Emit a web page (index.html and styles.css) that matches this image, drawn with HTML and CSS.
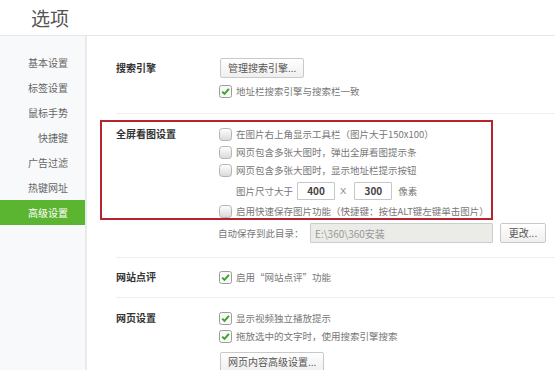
FILE: index.html
```html
<!DOCTYPE html>
<html lang="zh-CN">
<head>
<meta charset="utf-8">
<title>选项</title>
<link rel="stylesheet" href="styles.css">
</head>
<body>
<div class="page">
  <header class="header"><h1 class="title">选项</h1></header>
  <div class="main">
    <nav class="sidebar">
      <a class="nav-item">基本设置</a>
      <a class="nav-item">标签设置</a>
      <a class="nav-item">鼠标手势</a>
      <a class="nav-item">快捷键</a>
      <a class="nav-item">广告过滤</a>
      <a class="nav-item">热键网址</a>
      <a class="nav-item active">高级设置</a>
    </nav>
    <div class="content">
      <section class="section s-search">
        <div class="label l-btn">搜索引擎</div>
        <div class="controls">
          <button class="btn">管理搜索引擎...</button>
          <label class="check after-btn"><svg class="box" width="13" height="13" viewBox="0 0 13 13"><rect x="0.5" y="0.5" width="12" height="12" rx="2" fill="#f8f8f8" stroke="#9c9c9c"/><path d="M3.2 6.6 L5.5 8.9 L9.9 3.9" fill="none" stroke="#3ba22d" stroke-width="2"/></svg>地址栏搜索引擎与搜索栏一致</label>
        </div>
      </section>
      <section class="section s-view">
        <div class="label">全屏看图设置</div>
        <div class="controls">
          <label class="check"><svg class="box" width="13" height="13" viewBox="0 0 13 13"><defs><linearGradient id="g1" x1="0" y1="0" x2="0" y2="1"><stop offset="0" stop-color="#ffffff"/><stop offset="1" stop-color="#d9d9d9"/></linearGradient></defs><rect x="0.5" y="0.5" width="12" height="12" rx="3" fill="url(#g1)" stroke="#b4b4b4"/></svg>在图片右上角显示工具栏（图片大于150x100）</label>
          <label class="check"><svg class="box" width="13" height="13" viewBox="0 0 13 13"><rect x="0.5" y="0.5" width="12" height="12" rx="3" fill="url(#g1)" stroke="#b4b4b4"/></svg>网页包含多张大图时，弹出全屏看图提示条</label>
          <label class="check"><svg class="box" width="13" height="13" viewBox="0 0 13 13"><rect x="0.5" y="0.5" width="12" height="12" rx="3" fill="url(#g1)" stroke="#b4b4b4"/></svg>网页包含多张大图时，显示地址栏提示按钮</label>
          <div class="size-row">
            <span>图片尺寸大于</span>
            <input class="num" type="text" value="400">
            <span class="times">X</span>
            <input class="num" type="text" value="300">
            <span class="unit">像素</span>
          </div>
          <label class="check"><svg class="box" width="13" height="13" viewBox="0 0 13 13"><rect x="0.5" y="0.5" width="12" height="12" rx="3" fill="url(#g1)" stroke="#b4b4b4"/></svg>启用快速保存图片功能（快捷键：按住ALT键左键单击图片）</label>
          <div class="dir-row">
            <span class="dir-label">自动保存到此目录：</span>
            <input class="dir" type="text" value="E:\360\360安装" readonly>
            <button class="btn btn-change">更改...</button>
          </div>
        </div>
      </section>
      <section class="section s-review">
        <div class="label">网站点评</div>
        <div class="controls">
          <label class="check"><svg class="box" width="13" height="13" viewBox="0 0 13 13"><rect x="0.5" y="0.5" width="12" height="12" rx="2" fill="#f8f8f8" stroke="#9c9c9c"/><path d="M3.2 6.6 L5.5 8.9 L9.9 3.9" fill="none" stroke="#3ba22d" stroke-width="2"/></svg>启用“网站点评”功能</label>
        </div>
      </section>
      <section class="section s-page">
        <div class="label">网页设置</div>
        <div class="controls">
          <label class="check"><svg class="box" width="13" height="13" viewBox="0 0 13 13"><rect x="0.5" y="0.5" width="12" height="12" rx="2" fill="#f8f8f8" stroke="#9c9c9c"/><path d="M3.2 6.6 L5.5 8.9 L9.9 3.9" fill="none" stroke="#3ba22d" stroke-width="2"/></svg>显示视频独立播放提示</label>
          <label class="check"><svg class="box" width="13" height="13" viewBox="0 0 13 13"><rect x="0.5" y="0.5" width="12" height="12" rx="2" fill="#f8f8f8" stroke="#9c9c9c"/><path d="M3.2 6.6 L5.5 8.9 L9.9 3.9" fill="none" stroke="#3ba22d" stroke-width="2"/></svg>拖放选中的文字时，使用搜索引擎搜索</label>
          <button class="btn btn-adv">网页内容高级设置...</button>
        </div>
      </section>
    </div>
    <div class="highlight"></div>
  </div>
</div>
</body>
</html>
```

FILE: styles.css
```css
html, body {
  margin: 0;
  background: #fff;
}
body {
  font-family: "Noto Sans CJK SC", "Noto Sans", sans-serif;
  font-size: 10px;
  color: #777;
}
.page {
  width: 555px;
  height: 380px;
  overflow: hidden;
}
.header {
  height: 36px;
  box-sizing: border-box;
  border-bottom: 1px solid #e6e6e6;
  padding-left: 31px;
}
.title {
  margin: 0;
  font-size: 19px;
  font-weight: normal;
  color: #555;
  line-height: 36px;
}
.main {
  position: relative;
  display: flex;
  height: 334px;
  overflow: hidden;
}
.sidebar {
  width: 85px;
  flex: none;
  background: #f8f9fb;
  border-right: 2px solid #e9eaec;
  padding-top: 14px;
  display: flex;
  flex-direction: column;
}
.nav-item {
  height: 25px;
  line-height: 25px;
  text-align: right;
  padding-right: 17px;
  color: #666;
}
.nav-item.active {
  background: #5cb531;
  color: #fff;
}
.content {
  flex: 1;
  padding-left: 29px;
}
.section {
  display: flex;
  border-bottom: 1px solid #eeeeee;
}
.label {
  width: 102px;
  flex: none;
  font-weight: bold;
  color: #333;
  line-height: 18px;
}
.l-btn {
  line-height: 20px;
}
.controls {
  display: flex;
  flex-direction: column;
  align-items: flex-start;
}
.check {
  display: flex;
  align-items: center;
  height: 18px;
  line-height: 18px;
  margin-left: 1px;
  white-space: nowrap;
  font-size: 9.5px;
}
.box {
  flex: none;
  margin-right: 4px;
}
.btn {
  height: 20px;
  box-sizing: border-box;
  padding: 0 7px;
  margin: 0 0 0 2px;
  border: 1px solid #c9c9c9;
  border-radius: 2px;
  background: linear-gradient(#ffffff, #efefef);
  font: inherit;
  color: #555;
  line-height: 18px;
}
.s-search {
  padding: 22px 0 13px;
}
.after-btn {
  margin-top: 4px;
}
.s-view {
  padding: 11px 0 14px;
}
.size-row {
  display: flex;
  align-items: center;
  height: 23px;
  padding-left: 18px;
  white-space: nowrap;
  font-size: 9.5px;
}
.num {
  width: 38px;
  height: 18px;
  box-sizing: border-box;
  margin: 0 0 0 4px;
  padding: 0;
  border: 1px solid #c6c6c6;
  border-radius: 1px;
  background: #fff;
  font: inherit;
  font-size: 10px;
  font-weight: bold;
  color: #444;
  text-align: center;
}
.times {
  margin: 0 4px 0 5px;
  font-family: "Liberation Sans", sans-serif;
  color: #888;
}
.unit {
  margin-left: 6px;
}
.dir-row {
  display: flex;
  align-items: center;
  height: 20px;
  margin-top: 3px;
  white-space: nowrap;
}
.dir-label {
  width: 92px;
  font-size: 9.5px;
}
.dir {
  width: 183px;
  height: 20px;
  box-sizing: border-box;
  margin: 0;
  padding: 0 0 0 4px;
  border: 1px solid #cdcdcd;
  border-radius: 1px;
  background: #ebebe8;
  font: inherit;
  color: #999;
}
.btn-change {
  margin-left: 7px;
  width: 46px;
  padding: 0;
}
.s-review {
  padding: 10px 0 11px;
}
.s-page {
  padding: 11px 0 0;
  border-bottom: none;
}
.btn-adv {
  margin-top: 7px;
}
.highlight {
  position: absolute;
  left: 100px;
  top: 84px;
  width: 393px;
  height: 100px;
  box-sizing: border-box;
  border: 2px solid #b6242d;
  pointer-events: none;
}
```
